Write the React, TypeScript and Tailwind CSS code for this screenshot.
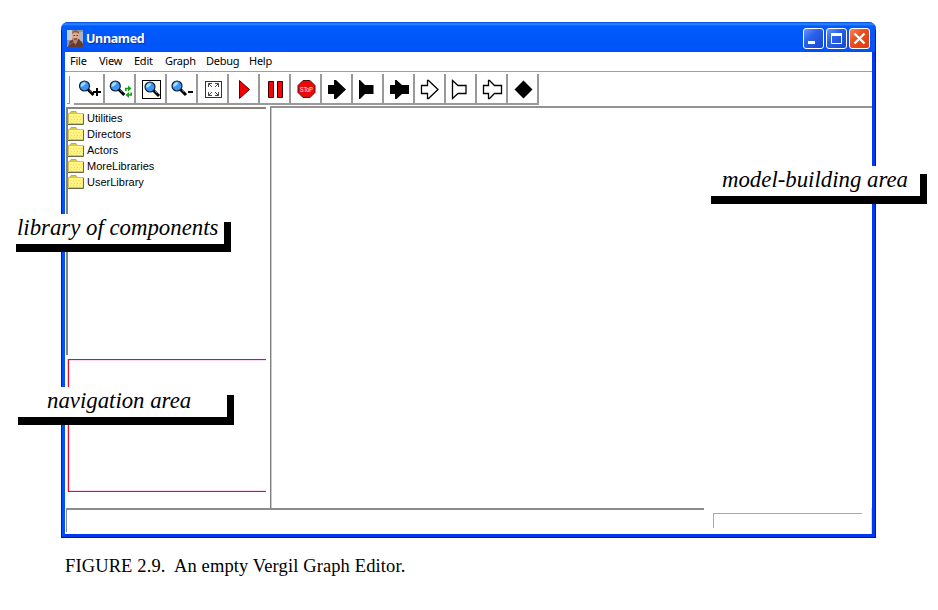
import React from "react";

const TITLE_FONT = "font-['Noto_Sans',sans-serif]";

function Lens({ x, y }: { x: number; y: number }) {
  return (
    <g transform={`translate(${x} ${y})`}>
      <path d="M3.5 3.5 L9 9" stroke="#000" strokeWidth="3" />
      <circle r="5" fill="#3d95f5" stroke="#102030" strokeWidth="1.2" />
      <path d="M-3.8 0.8 A3.8 3.8 0 0 1 0.8 -3.7 L1 -2 L-1.6 0.2 Z" fill="#a6dcff" />
      <path d="M5 4.2 L7 6" stroke="#6aa6d8" strokeWidth="0.8" />
    </g>
  );
}

const icons: React.ReactNode[] = [
  <>
    <Lens x={10.5} y={13} />
    <path d="M19 19h8M23 15v8" stroke="#000" strokeWidth="2" />
  </>,
  <>
    <Lens x={10.3} y={13} />
    <path d="M20.800 18v-2.500h2.500M26.200 19.500v2.500h-2.500" stroke="#16a016" strokeWidth="1.600" fill="none" />
    <path d="M23 12.500l3.500 3-3.500 3zM24 19l-3.500 3 3.500 3z" fill="#16a016" />
  </>,
  <>
    <rect x="6.5" y="7.5" width="18" height="18" fill="#fffff0" stroke="#000" />
    <Lens x={14} y={14} />
  </>,
  <>
    <Lens x={10} y={13} />
    <path d="M21 19h5" stroke="#000" strokeWidth="2" />
  </>,
  <>
    <rect x="7.5" y="8.5" width="16" height="16" fill="#fff" stroke="#333" />
    <path
      d="M10.500 14v-3.500h3.500M17 10.500h3.500V14M20.500 19v3.500H17M14 22.500h-3.500V19M10.500 10.500l3.500 3.500M20.500 10.500L17 14M20.500 22.500L17 19M10.500 22.500L14 19"
      stroke="#333"
      fill="none"
      strokeWidth="0.9"
    />
  </>,
  <path d="M10.500 7.500v18L20.500 16.500z" fill="#f00000" stroke="#4a0808" />,
  <path d="M8.500 8.500h5v16h-5zM17.500 8.500h5v16h-5z" fill="#ff0000" stroke="#300" />,
  <>
    <path d="M12 7.500h7l5 5v7l-5 5h-7l-5-5v-7z" fill="#ee0808" stroke="#501010" />
    <text x="15.500" y="19" textAnchor="middle" fontSize="7" fill="#fff" fontFamily="Liberation Sans, sans-serif" textLength="13" lengthAdjust="spacingAndGlyphs">SToP</text>
  </>,
  <path d="M6 12h6V7h2l10 9.500L14 26h-2v-5H6z" />,
  <path d="M6 7h1l5 5h8.500v9H12l-5 5H6z" />,
  <path d="M6 12h5V7h1.500l5.500 5h7v9h-7l-5.500 5H11v-5H6z" />,
  <path d="M6.500 12.500h6v-5h1l9.500 9-9.500 9h-1v-5h-6z" fill="#fff" stroke="#000" strokeWidth="1.300" />,
  <path d="M6.500 7.500l5.500 5h8v8h-8l-5.500 5z" fill="#fff" stroke="#000" strokeWidth="1.300" />,
  <path d="M6.500 12.500h5v-5h1l5 5h7v8h-7l-5 5h-1v-5h-5z" fill="#fff" stroke="#000" strokeWidth="1.300" />,
  <path d="M15.500 7.500l9 9-9 9-9-9z" />,
];

const menus: { label: string; cls: string }[] = [
  { label: "File", cls: "w-[29px]" },
  { label: "View", cls: "w-[35px]" },
  { label: "Edit", cls: "w-[31px]" },
  { label: "Graph", cls: "w-[41px]" },
  { label: "Debug", cls: "w-[43px]" },
  { label: "Help", cls: "w-[30px]" },
];

function Folder() {
  return (
    <svg className="block shrink-0" width="17" height="14" viewBox="0 0 17 14">
      <path d="M1.500 2.500l1.500-2h5l1.500 2z" fill="#d8c84c" stroke="#b8ac50" />
      <path d="M0.500 2.500h15v10h-15z" fill="#fff584" stroke="#d0c468" />
      <path d="M2 5.500h13M3 8.500h12M2 10.500h13" stroke="#ffd060" strokeDasharray="1 2" />
      <path d="M0 13.500h15.500V3" fill="none" stroke="#6c6a48" />
    </svg>
  );
}

function WindowButton({ kind }: { kind: "min" | "max" | "close" }) {
  const red = kind === "close";
  return (
    <svg width="21" height="21" viewBox="0 0 21 21">
      <defs>
        <linearGradient id={`face-${kind}`} x1="0" y1="0" x2="1" y2="1">
          <stop offset="0" stopColor={red ? "#f08a68" : "#6c98ff"} />
          <stop offset="0.4" stopColor={red ? "#f04e1c" : "#2b61ea"} />
          <stop offset="1" stopColor={red ? "#e03a08" : "#1645d0"} />
        </linearGradient>
      </defs>
      <rect x="0.500" y="0.500" width="20" height="20" rx="2.500" fill={`url(#face-${kind})`} stroke="#fff" />
      {kind === "min" && <path d="M5 14.500h7" stroke="#fff" strokeWidth="3" />}
      {kind === "max" && (
        <>
          <path d="M5.500 6v9.500h10V6" stroke="#fff" fill="none" />
          <path d="M5 6.500h11" stroke="#fff" strokeWidth="3" />
        </>
      )}
      {kind === "close" && <path d="M5.500 5.500l10 10M15.500 5.500l-10 10" stroke="#fff" strokeWidth="2.300" />}
    </svg>
  );
}

function Portrait() {
  return (
    <svg width="16" height="17" viewBox="0 0 16 17">
      <path d="M0 0h16v17H0z" fill="#8a96ac" />
      <path d="M0 0h5v10H0z" fill="#c4ccd8" />
      <path d="M11 2h5v9h-5z" fill="#a8b4c8" />
      <path d="M1 17l2-6 4-2h5l4 5v3z" fill="#603c34" />
      <ellipse cx="8.500" cy="6" rx="3.600" ry="4.500" fill="#e0ac8c" />
      <path d="M5 4l1-3 3-1 3 2v2l-2-1.500H7z" fill="#8a5a44" />
      <path d="M6 8h5l-1 5-2 1-2-3z" fill="#b78470" />
      <path d="M6.500 5.500h1.500M9.500 5.500H11M7 9h3" stroke="#633" />
      <path d="M2 15l4-3 3 3" stroke="#c7543d" fill="none" />
    </svg>
  );
}

function Callout({ text, box, label }: { text: string; box: string; label: string }) {
  return (
    <div className={`absolute h-[38px] ${box}`}>
      <div className="h-[30px] bg-white" />
      <div className="h-[8px] bg-black" />
      <div className="absolute right-0 top-0 h-[8px] w-[7px] bg-white" />
      <div className="absolute bottom-0 right-0 h-[30px] w-[7px] bg-black" />
      <span
        className={`absolute top-0 whitespace-nowrap font-['Liberation_Serif',serif] text-[22.8px] italic leading-[27px] ${label}`}
      >
        {text}
      </span>
    </div>
  );
}

export default function App() {
  return (
    <div className="relative h-[610px] w-[938px] overflow-hidden bg-white pl-[61px] pt-[22px] text-black">
      <div className="flex h-[516px] w-[815px] flex-col rounded-t-[7px] bg-[#0050f8]">
        <header className="flex h-[30px] shrink-0 items-center rounded-t-[7px] bg-[linear-gradient(#0046d5_0px,#328bff_2px,#005cff_4px,#0055f8_22px,#0055ff_27px,#004fee_30px)] pl-[6px] pr-[6px] pt-[3px]">
          <Portrait />
          <h1 className={`ml-[3px] flex-1 text-[12.5px] font-bold leading-4 tracking-[-0.35px] text-white [text-shadow:1px_1px_#0830a0] ${TITLE_FONT}`}>
            Unnamed
          </h1>
          <div className="flex gap-[2px]">
            <WindowButton kind="min" />
            <WindowButton kind="max" />
            <WindowButton kind="close" />
          </div>
        </header>

        <div className="flex min-h-0 flex-1 flex-col border-b-4 border-l-4 border-r-4 border-b-[#0038f0] border-l-[#0050ff] border-r-[#0038f0] bg-white shadow-[inset_0_0_0_0_#fff,0_0_0_0_#fff]">
          <nav className={`flex h-[19px] shrink-0 pl-[5px] text-[11px] leading-[18px] tracking-[-0.25px] ${TITLE_FONT}`}>
            {menus.map((m) => (
              <span key={m.label} className={m.cls}>{m.label}</span>
            ))}
          </nav>

          <div className="flex h-[35px] shrink-0 border-t border-[#a0a0a0] pl-[2px] pt-[2px]">
            <div className="mt-[2px] h-[28px] w-[3px] border-b border-r border-[#999]" />
            <div className="ml-[4px] flex">
              {icons.map((icon, i) => (
                <button key={i} className="h-[31px] w-[31px] border-b-2 border-r-2 border-[#999]">
                  <svg className="-mt-[3px] block" width="29" height="29" viewBox="0 0 29 29">{icon}</svg>
                </button>
              ))}
            </div>
          </div>

          <main className="flex h-[402px] shrink-0">
            <aside className="flex w-[205px] flex-col pl-[1px] pt-[1px]">
              <ul className="h-[248px] w-[200px] border-l-2 border-t-2 border-[#888478] pt-[1px]">
                {["Utilities", "Directors", "Actors", "MoreLibraries", "UserLibrary"].map((name) => (
                  <li key={name} className="flex h-[16px] items-center font-['Liberation_Sans',Arial,sans-serif] text-[11px] leading-4">
                    <Folder />
                    <span className="ml-[2px]">{name}</span>
                  </li>
                ))}
              </ul>
              <div className="ml-[2px] mt-[4px] h-[133px] w-[198px] border-b border-l border-t border-[#ff0020] shadow-[-1px_0_#ffc0dc,inset_0_1px_#ffd8f8,inset_0_-1px_#ffd8f8]" />
            </aside>
            <section className="flex-1 border-l border-t-2 border-[#808080] border-t-[#949494] shadow-[inset_1px_0_#c8c8c8]" />
          </main>

          <footer className="flex min-h-0 flex-1 border-r border-[#d8d8f4] pl-[1px]">
            <div className="h-[24px] w-[638px] border-l border-t-2 border-[#8c8c8c]" />
            <div className="ml-[9px] mt-[5px] h-[15px] w-[149px] border-l border-t border-[#a8a8a8]" />
          </footer>
        </div>
      </div>

      <p className="ml-[4px] mt-[17px] whitespace-pre font-['Liberation_Serif',serif] text-[18.5px] leading-[22px] tracking-[0.12px]">
        {"FIGURE 2.9.  An empty Vergil Graph Editor."}
      </p>

      <div className="absolute left-[61px] top-[30px] h-[508px] w-[815px] border-x border-b border-b-[#0010a0] border-l-[#0018c8] border-r-[#0010a0]" />

      <Callout text="library of components" box="left-[16px] top-[214px] w-[215px]" label="left-[1px]" />
      <Callout text="navigation area" box="left-[18px] top-[387px] w-[216px]" label="left-[29px]" />
      <Callout text="model-building area" box="left-[711px] top-[166px] w-[216px]" label="left-[11px]" />
    </div>
  );
}
